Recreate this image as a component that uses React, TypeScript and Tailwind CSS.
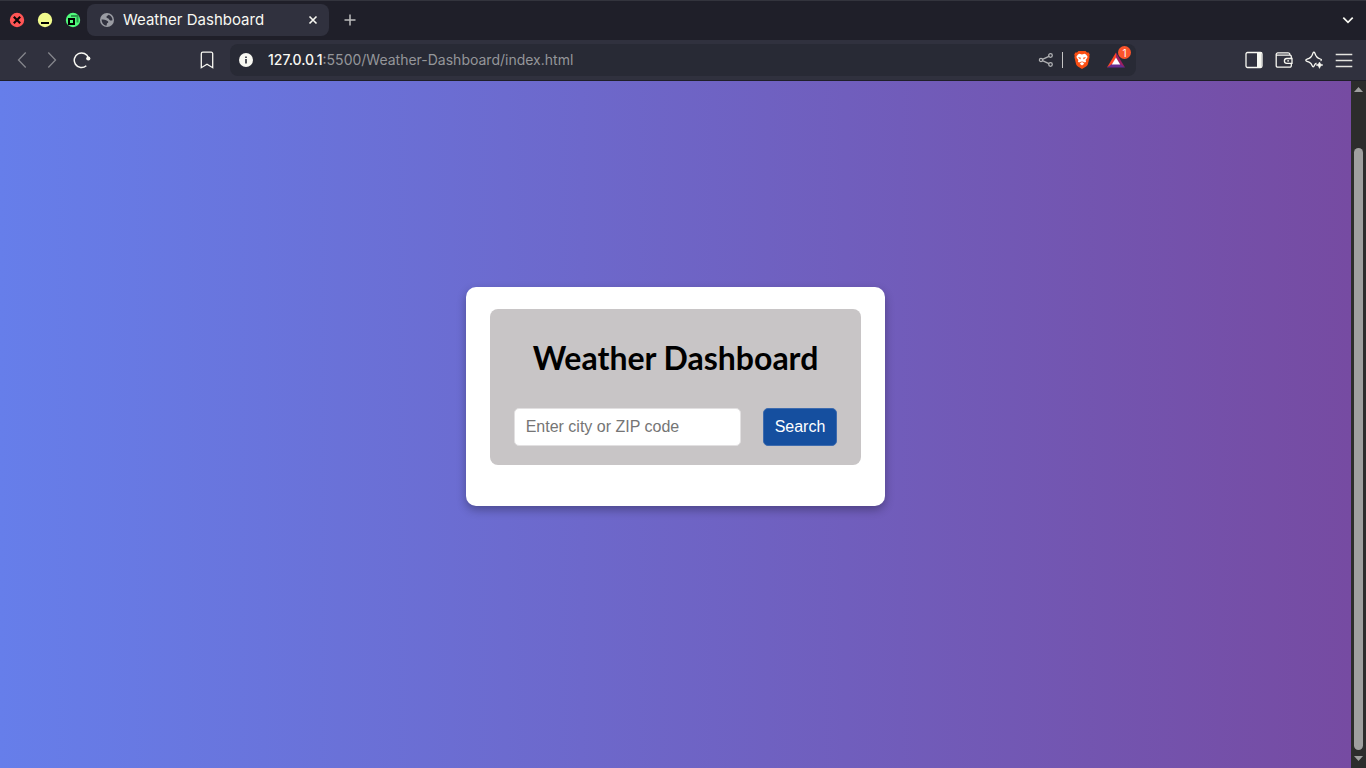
import React from "react";

type IconButtonProps = {
  label: string;
  className?: string;
  children: React.ReactNode;
};

function IconButton({ label, className = "", children }: IconButtonProps) {
  return (
    <button type="button" aria-label={label} className={`flex shrink-0 items-center justify-center ${className}`}>
      {children}
    </button>
  );
}

function WindowControls() {
  return (
    <div className="flex items-center gap-3">
      <IconButton label="Close window" className="size-4">
        <svg viewBox="0 0 16 16" className="size-4">
          <circle cx="8" cy="8" r="7.2" fill="#ff5555" />
          <path d="M4.8 4.8l6.4 6.4M11.2 4.8l-6.4 6.4" stroke="#0b0606" strokeWidth="2.2" />
        </svg>
      </IconButton>
      <IconButton label="Minimize window" className="size-4">
        <svg viewBox="0 0 16 16" className="size-4">
          <circle cx="8" cy="8" r="7.2" fill="#f1fa8c" />
          <rect x="4" y="10" width="8" height="2" fill="#000" />
        </svg>
      </IconButton>
      <IconButton label="Restore window" className="size-4">
        <svg viewBox="0 0 16 16" className="size-4">
          <circle cx="8" cy="8" r="7.2" fill="#50fa7b" />
          <path d="M6 4h6.500v6.500" fill="none" stroke="#2b9a4c" strokeWidth="2" />
          <path d="M4 7h5v5H4z" fill="#50fa7b" stroke="#000" strokeWidth="2" />
        </svg>
      </IconButton>
    </div>
  );
}

function TabBar() {
  return (
    <header className="flex h-10 shrink-0 items-center border-t border-[#33343d] bg-[#1f1f29] pr-2.5 pb-0.5 pl-[9px]">
      <WindowControls />
      <div className="ml-1.5 flex h-8 w-[242px] items-center rounded-lg bg-[#30313e] pr-2 pl-3">
        <svg viewBox="0 0 16 16" className="size-4 shrink-0">
          <circle cx="8" cy="8" r="7" fill="#9a9ca3" />
          <path
            d="M2.500 7.600c1.700-.2 3.500 0 4.700.7 1 .6 2 .8 2.100 1.800.1 1-1.300 1-1.500 1.900-.1.700 0 1.500-.6 1.700C4.500 13.200 2.600 11 2.500 7.600zM9.500 2.700c-.3 1-2 1-2.100 2.200-.1 1 1.200 1.200 2 1.700.8.500.7 1.700 1.900 1.900.8.100 1.400-.3 2.200-.3-.1-2.700-1.500-4.700-4-5.500z"
            fill="#30313e"
          />
        </svg>
        <span className="ml-2 flex-1 text-[15px] leading-5 whitespace-nowrap text-[#f8f8f2]">Weather Dashboard</span>
        <IconButton label="Close tab" className="size-4">
          <svg viewBox="0 0 16 16" className="size-4" stroke="#f8f8f2" strokeWidth="1.6">
            <path d="M4.500 4.500l7 7M11.500 4.500l-7 7" />
          </svg>
        </IconButton>
      </div>
      <IconButton label="New tab" className="ml-[13px] size-4">
        <svg viewBox="0 0 16 16" className="size-4" stroke="#bdbdbd" strokeWidth="1.5">
          <path d="M8 2.500v11M2.500 8h11" />
        </svg>
      </IconButton>
      <IconButton label="Search tabs" className="ml-auto size-4">
        <svg viewBox="0 0 16 16" className="size-4" fill="none" stroke="#f8f8f2" strokeWidth="1.7">
          <path d="M3.300 5.600L8 10.300l4.700-4.700" />
        </svg>
      </IconButton>
    </header>
  );
}

function BraveIcon() {
  return (
    <svg viewBox="0 0 18 20" className="h-5 w-[18px]">
      <path
        d="M5.500 1h7l1.500 1.600 1.700-.1 1.100 2.200-.6 1.200.4 1.200-1.700 7.200c-.3 1-1 1.700-1.800 2.300L9 19l-4.100-2.400c-.8-.6-1.500-1.300-1.800-2.300L1.400 7.100l.4-1.200-.6-1.200 1.100-2.200 1.700.1z"
        fill="#fb4f14"
      />
      <path
        d="M9 4.400l2.600-.7 1.400.8 1.600 2.300-.5 1.300-1.500 2 .5 1.300-1 1-1.500-.5-.8.700 1.500 1.200L9 15.600l-2.300-1.800 1.500-1.200-.8-.7-1.500.5-1-1 .5-1.300-1.500-2-.5-1.300L5 4.500l1.400-.8z"
        fill="#fff"
      />
      <path d="M4.900 7l3 .8-.6 1.600zM13.100 7l-3 .8.600 1.600zM7.400 11.300l1.600.5 1.600-.5L9 12.800z" fill="#fb4f14" />
    </svg>
  );
}

function AddressBar() {
  return (
    <div className="ml-3.5 flex h-8 min-w-0 flex-1 items-center rounded-lg bg-[#282a35] pr-[11px] pl-2">
      <IconButton label="Site information" className="size-4">
        <svg viewBox="0 0 16 16" className="size-4">
          <circle cx="8" cy="8" r="7" fill="#f8f8f2" />
          <path d="M7.200 4.500h1.600V6H7.200zM7.200 7h1.600v4.500H7.200z" fill="#282a35" />
        </svg>
      </IconButton>
      <a href="#" className="ml-3.5 flex-1 truncate text-sm text-[#95969a]">
        <span className="font-medium text-[#f8f8f2]">127.0.0.1</span>:5500/Weather-Dashboard/index.html
      </a>
      <IconButton label="Share" className="size-4">
        <svg viewBox="0 0 16 16" className="size-4" fill="none" stroke="#b0b1b3" strokeWidth="1.300">
          <circle cx="3" cy="8" r="1.600" />
          <circle cx="12.500" cy="3.500" r="1.800" />
          <circle cx="12.500" cy="12.500" r="1.800" />
          <path d="M4.500 7.300l6.400-3M4.500 8.700l6.400 3" />
        </svg>
      </IconButton>
      <span className="ml-2 h-4 w-px bg-[#c4c4c4]" />
      <IconButton label="Brave Shields" className="ml-2.5">
        <BraveIcon />
      </IconButton>
      <IconButton label="Brave Rewards" className="relative ml-4 h-5 w-[18px]">
        <svg viewBox="0 0 18 18" className="size-[18px]">
          <path d="M9 1.500L0 16.500l5-2.500 4-7z" fill="#ff4724" />
          <path d="M9 1.500L18 16.500l-5-2.500L9 7z" fill="#9e1f63" />
          <path d="M0 16.500h18L13 13H5z" fill="#662d91" />
          <path d="M9 6.500l4.200 7H4.800z" fill="#fff" />
        </svg>
        <span className="absolute -top-1 -right-1.5 flex size-[13px] items-center justify-center rounded-full bg-[#fb542b] text-[10px] leading-3 text-white">
          1
        </span>
      </IconButton>
    </div>
  );
}

function Toolbar() {
  return (
    <nav aria-label="Browser toolbar" className="flex h-[41px] shrink-0 items-center border-b border-[#1f1f29] bg-[#30313e] px-[13px]">
      <div className="flex items-center gap-3">
        <IconButton label="Back" className="size-[18px]">
          <svg viewBox="0 0 18 18" className="size-[18px]" fill="none" stroke="#85868c" strokeWidth="1.300">
            <path d="M12.700 1.500L5.500 9l7.200 7.500" />
          </svg>
        </IconButton>
        <IconButton label="Forward" className="size-[18px]">
          <svg viewBox="0 0 18 18" className="size-[18px]" fill="none" stroke="#85868c" strokeWidth="1.300">
            <path d="M5.300 1.500L12.500 9l-7.200 7.500" />
          </svg>
        </IconButton>
        <IconButton label="Reload" className="size-[18px]">
          <svg viewBox="0 0 18 18" className="size-[18px]">
            <path d="M13.300 14.800A7.300 7.300 0 1 1 15.500 7" fill="none" stroke="#f8f8f2" strokeWidth="1.500" />
            <circle cx="15.300" cy="7.500" r="2.100" fill="#f8f8f2" />
          </svg>
        </IconButton>
      </div>
      <IconButton label="Bookmark this page" className="ml-[107px] size-[18px]">
        <svg viewBox="0 0 18 18" className="size-[18px]" fill="none" stroke="#f8f8f2" strokeWidth="1.300">
          <path d="M3.300 2.700a1.500 1.500 0 0 1 1.500-1.500h8.400a1.500 1.500 0 0 1 1.500 1.500v14L9 13.300l-5.700 3.400z" />
        </svg>
      </IconButton>
      <AddressBar />
      <div className="ml-[109px] flex items-center gap-3">
        <IconButton label="Side panel" className="size-[18px]">
          <svg viewBox="0 0 18 18" className="size-[18px]">
            <rect x="1" y="1.500" width="16" height="15" rx="1.500" fill="none" stroke="#f8f8f2" strokeWidth="1.300" />
            <path d="M12 1.500h4.500v15H12z" fill="#f8f8f2" />
          </svg>
        </IconButton>
        <IconButton label="Wallet" className="size-[18px]">
          <svg viewBox="0 0 18 18" className="size-[18px]" fill="none" stroke="#f8f8f2" strokeWidth="1.300">
            <path d="M15 3.800A1.900 1.900 0 0 0 13.200 1.900H2.800a1.600 1.600 0 0 0-1.600 1.600v11A1.600 1.600 0 0 0 2.800 16.200h12.100a1.400 1.400 0 0 0 1.400-1.400v-2.300M1.400 4.200h13.500a1.400 1.400 0 0 1 1.400 1.400V7" />
            <path d="M17 7.500h-5.200a2.400 2.400 0 0 0 0 4.800H17zM12.300 9.900h1.700" />
          </svg>
        </IconButton>
        <IconButton label="Leo AI" className="size-[18px]">
          <svg viewBox="0 0 18 18" className="size-[18px]" fill="none" stroke="#f8f8f2" strokeWidth="1.300" strokeLinejoin="round">
            <path d="M11.500 12.200c-1.200.4-1.700 1-2.200 2.300-.6 1.700-1.600 1.700-2.200 0-.6-1.800-1.300-2.600-3-3.300L2 10.300c-1.600-.6-1.600-1.500 0-2.100l2.100-.9c1.700-.7 2.300-1.400 3-3L8 2.100c.5-1.300 1.300-1.300 1.800 0l.9 2.200c.7 1.600 1.300 2.300 3 3l1.700.7c1.300.5 1.300 1.300.2 1.800" />
            <path d="M14.500 11l1.100 2 2.400 1-2.400 1-1.100 2.400-1.100-2.400-2.400-1 2.400-1z" fill="#f8f8f2" stroke="#f8f8f2" strokeWidth=".5" />
          </svg>
        </IconButton>
        <IconButton label="Menu" className="size-[18px]">
          <svg viewBox="0 0 18 18" className="size-[18px]" stroke="#e4e4df" strokeWidth="1.400">
            <path d="M.7 3.500h16.600M.7 9.500h16.600M.7 15.500h16.600" />
          </svg>
        </IconButton>
      </div>
    </nav>
  );
}

function WeatherCard() {
  return (
    <section className="rounded-[10px] bg-white px-6 pt-[22px] pb-[41px] shadow-[0_4px_10px_rgba(0,0,0,0.3)]">
      <div className="rounded-lg bg-[#c8c5c6] px-6 pt-[30px] pb-[19px]">
        <h1 className="text-center font-['Lato',sans-serif] text-[32px] leading-[38px] font-bold text-black">Weather Dashboard</h1>
        <form className="mt-[31px] flex gap-[22px] font-['Liberation_Sans',sans-serif] text-base" onSubmit={(e) => e.preventDefault()}>
          <input
            type="text"
            aria-label="City or ZIP code"
            placeholder="Enter city or ZIP code"
            className="h-[38px] w-[227px] rounded-[5px] border border-[#e2e0e1] bg-white px-[11px] text-black placeholder:text-[#757575]"
          />
          <button type="submit" className="h-[38px] rounded-[5px] border border-[#3d6bae] bg-[#154f9f] px-[11px] text-white">
            Search
          </button>
        </form>
      </div>
    </section>
  );
}

function Scrollbar() {
  return (
    <div aria-hidden="true" className="flex w-[15px] shrink-0 flex-col items-center bg-[#2c2c2c] pt-1.5 pb-[7px]">
      <svg viewBox="0 0 9 5" className="h-[5px] w-[9px] shrink-0">
        <path d="M4.500 0L9 5H0z" fill="#9f9f9f" />
      </svg>
      <div className="mt-14 w-[9px] flex-1 rounded-full bg-[#9f9f9f]" />
      <svg viewBox="0 0 9 5" className="mt-1.5 h-[5px] w-[9px] shrink-0">
        <path d="M0 0h9L4.500 5z" fill="#9f9f9f" />
      </svg>
    </div>
  );
}

export default function App() {
  return (
    <div className="flex h-screen flex-col overflow-hidden font-['Inter',sans-serif]">
      <TabBar />
      <Toolbar />
      <div className="flex min-h-0 flex-1">
        <main className="flex flex-1 items-center justify-center bg-[linear-gradient(90deg,#667eea,#764ba2)] pb-14">
          <WeatherCard />
        </main>
        <Scrollbar />
      </div>
    </div>
  );
}
